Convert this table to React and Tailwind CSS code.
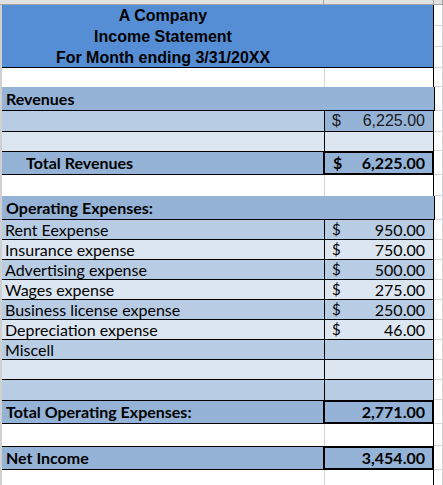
const calibri = { fontFamily: "Lato, 'Open Sans', sans-serif" };

const DARK = "bg-[#b8cce4]";
const LIGHT = "bg-[#dce6f1]";
const MID = "bg-[#95b3d7]";

function Gutter({ line = true }) {
  return <div className={`flex-1 bg-white border-r border-[#d4d4d4] ${line ? "border-b" : ""}`} />;
}

function Edge() {
  return <div className="w-[2px] shrink-0 bg-[#d0d0d0]" />;
}

function WhiteRow({ h }) {
  return (
    <div className={`flex ${h}`}>
      <Edge />
      <div className="w-[322px] shrink-0 bg-white" />
      <div className="w-[109px] shrink-0 border-l border-[#d4d4d4] bg-white" />
      <div className="w-[1px] shrink-0 bg-black" />
      <Gutter />
    </div>
  );
}

function SectionRow({ label }) {
  return (
    <div className="flex h-[24px]">
      <Edge />
      <div className={`flex w-[432px] shrink-0 items-center border-b border-black ${MID} pl-[4px] text-[16px] font-bold text-black`} style={calibri}>
        {label}
      </div>
      <div className="w-[1px] shrink-0 bg-black" />
      <Gutter />
    </div>
  );
}

function LineRow({ label, amount, bg, border = true }) {
  return (
    <div className="flex h-[20px]">
      <Edge />
      <div className={`flex w-[322px] shrink-0 items-center ${border ? "border-b border-black" : ""} ${bg} pl-[3px] text-[16px] text-black`} style={calibri}>
        {label}
      </div>
      <div className={`flex w-[109px] shrink-0 items-center justify-between border-l border-black ${border ? "border-b" : ""} ${bg} pl-[7px] pr-[8px] text-[15px] text-black`} style={calibri}>
        {amount && <span>$</span>}
        {amount && <span className="text-[16px]">{amount}</span>}
      </div>
      <div className="w-[1px] shrink-0 bg-black" />
      <Gutter />
    </div>
  );
}

function TotalRow({ label, amount, dollar, indent }) {
  return (
    <div className="flex h-[24px]">
      <Edge />
      <div className={`flex w-[321px] shrink-0 items-center border-y border-black ${MID} ${indent ? "pl-[24px]" : "pl-[4px]"} text-[16px] font-bold text-black`} style={calibri}>
        {label}
      </div>
      <div className={`flex w-[111px] shrink-0 items-center ${dollar ? "justify-between" : "justify-end"} border-2 border-black ${MID} pl-[8px] pr-[7px] text-[16px] font-bold text-black`} style={calibri}>
        {dollar && <span>$</span>}
        <span>{amount}</span>
      </div>
      <Gutter />
    </div>
  );
}

const expenses = [
  ["Rent Eexpense", "950.00"],
  ["Insurance expense", "750.00"],
  ["Advertising expense", "500.00"],
  ["Wages expense", "275.00"],
  ["Business license expense", "250.00"],
  ["Depreciation expense", "46.00"],
  ["Miscell", ""],
  ["", ""],
  ["", ""],
];

export default function App() {
  return (
    <div className="h-[485px] w-[443px] overflow-hidden bg-white">
      <div className="flex h-[5px]">
        <div className="w-[324px] border-b border-r border-[#a6a6a6] bg-[#e1e1e1]" />
        <div className="w-[110px] border-b border-r border-[#a6a6a6] bg-[#e1e1e1]" />
        <div className="flex-1 border-b border-r border-[#a6a6a6] bg-[#e1e1e1]" />
      </div>

      <div className="flex h-[63px]">
        <Edge />
        <div className="flex w-[431px] shrink-0 border-b border-black bg-[#558ed5]">
          <div className="flex w-[322px] flex-col items-center pt-[1px] text-[16px] font-bold leading-[20px] text-black" style={{ fontFamily: "'Liberation Sans', Arial, sans-serif" }}>
            <div className="h-[20px]">A Company</div>
            <div className="h-[20px] pt-[1px]">Income Statement</div>
            <div className="h-[20px] pt-[2px]">For Month ending 3/31/20XX</div>
          </div>
        </div>
        <div className="w-[1px] shrink-0 bg-black" />
        <div className="flex flex-1 flex-col border-r border-[#d4d4d4]">
          <div className="h-[21px] border-b border-[#d4d4d4]" />
          <div className="h-[21px] border-b border-[#d4d4d4]" />
          <div className="flex-1 border-b border-[#d4d4d4]" />
        </div>
      </div>

      <WhiteRow h="h-[19px]" />

      <SectionRow label="Revenues" />

      <div className="flex h-[21px]">
        <Edge />
        <div className={`w-[322px] shrink-0 border-b border-black ${DARK}`} />
        <div className={`flex w-[109px] shrink-0 items-center justify-between border-b border-l border-black ${MID} pl-[7px] pr-[8px] text-[16px] text-[#1a1a1a]`} style={{ fontFamily: "'Liberation Sans', Arial, sans-serif" }}>
          <span>$</span>
          <span>6,225.00</span>
        </div>
        <div className="w-[1px] shrink-0 bg-black" />
        <Gutter />
      </div>

      <div className="flex h-[19px]">
        <Edge />
        <div className={`w-[322px] shrink-0 ${LIGHT}`} />
        <div className={`w-[109px] shrink-0 border-l border-black ${LIGHT}`} />
        <div className="w-[1px] shrink-0 bg-black" />
        <Gutter />
      </div>

      <TotalRow label="Total Revenues" amount="6,225.00" dollar indent />

      <WhiteRow h="h-[21px]" />

      <SectionRow label="Operating Expenses:" />

      {expenses.map(([label, amount], i) => (
        <LineRow key={i} label={label} amount={amount} bg={i % 2 === 0 ? DARK : LIGHT} border={i < expenses.length - 1} />
      ))}

      <TotalRow label="Total Operating Expenses:" amount="2,771.00" />

      <WhiteRow h="h-[22px]" />

      <TotalRow label="Net Income" amount="3,454.00" />

      <WhiteRow h="h-[20px]" />
    </div>
  );
}
